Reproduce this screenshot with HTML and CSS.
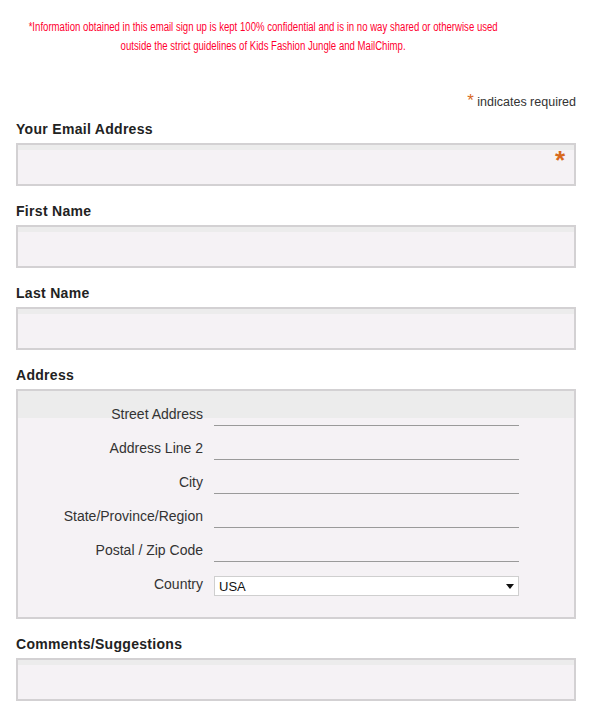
FILE: index.html
```html
<!DOCTYPE html>
<html>
<head>
<meta charset="utf-8">
<link rel="stylesheet" href="styles.css">
</head>
<body>
<div class="page">
  <div class="notice">
    <span class="notice-line">*Information obtained in this email sign up is kept 100% confidential and is in no way shared or otherwise used</span>
    <span class="notice-line">outside the strict guidelines of Kids Fashion Jungle and MailChimp.</span>
  </div>
  <div class="req-note"><span class="star">*</span> indicates required</div>

  <div class="field">
    <label class="label">Your Email Address</label>
    <div class="box box-input"><span class="box-star">*</span></div>
  </div>
  <div class="field">
    <label class="label">First Name</label>
    <div class="box box-input"></div>
  </div>
  <div class="field">
    <label class="label">Last Name</label>
    <div class="box box-input"></div>
  </div>
  <div class="field">
    <label class="label">Address</label>
    <div class="box box-address">
      <div class="addr-row"><span class="addr-label">Street Address</span><span class="addr-line"></span></div>
      <div class="addr-row"><span class="addr-label">Address Line 2</span><span class="addr-line"></span></div>
      <div class="addr-row"><span class="addr-label">City</span><span class="addr-line"></span></div>
      <div class="addr-row"><span class="addr-label">State/Province/Region</span><span class="addr-line"></span></div>
      <div class="addr-row"><span class="addr-label">Postal / Zip Code</span><span class="addr-line"></span></div>
      <div class="addr-row"><span class="addr-label">Country</span><span class="select"><span class="select-text">USA</span><svg class="caret" width="8" height="5" viewBox="0 0 8 5"><path d="M0 0H8L4 5Z" fill="#111"/></svg></span></div>
    </div>
  </div>
  <div class="field">
    <label class="label">Comments/Suggestions</label>
    <div class="box box-input"></div>
  </div>
</div>
</body>
</html>
```

FILE: styles.css
```css
html, body {
  margin: 0;
  padding: 0;
  background: #fff;
}
body {
  font-family: "Liberation Sans", Arial, sans-serif;
  color: #333;
}
.page {
  padding: 0 15px 0 16px;
}
.notice {
  padding: 18px 66px 0 0;
  display: flex;
  flex-direction: column;
  align-items: center;
}
.notice-line {
  display: block;
  white-space: nowrap;
  font-family: "Liberation Sans", Arial, sans-serif;
  font-size: 12px;
  line-height: 19px;
  color: #ff0030;
  transform: scaleX(0.8);
}
.req-note {
  margin-top: 37px;
  text-align: right;
  font-size: 12.5px;
  line-height: 16px;
  color: #333;
}
.req-note .star {
  color: #d8691e;
  font-size: 17px;
  font-weight: normal;
}
.field {
  display: flex;
  flex-direction: column;
}
.label {
  display: block;
  font-weight: bold;
  font-size: 14px;
  letter-spacing: 0.3px;
  line-height: 16px;
  color: #222;
  margin: 11px 0 6px;
}
.field + .field .label {
  margin-top: 17px;
}
.box {
  box-sizing: border-box;
  border: 2px solid #d3d1d3;
  background: linear-gradient(#ececec 0, #ececec 5px, #f5f2f5 5px);
  position: relative;
}
.box-input {
  height: 43px;
}
.box-star {
  position: absolute;
  right: 9px;
  top: 2px;
  font-size: 26px;
  font-weight: bold;
  color: #d8691e;
  line-height: 26px;
}
.box-address {
  background: linear-gradient(#ececec 0, #ececec 27px, #f5f2f5 27px);
  padding: 11px 0 23px;
  display: flex;
  flex-direction: column;
}
.addr-row {
  display: flex;
  align-items: flex-end;
  height: 34px;
}
.addr-row:first-child {
  height: 22px;
}
.addr-label {
  width: 185px;
  text-align: right;
  font-size: 14px;
  line-height: 16px;
  color: #333;
  padding-right: 11px;
  margin-bottom: 2px;
}
.addr-line {
  width: 305px;
  height: 1px;
  background: #9a9a9a;
  margin-bottom: -2px;
}
.select {
  box-sizing: border-box;
  width: 305px;
  height: 20px;
  border: 1px solid #cfcfcf;
  background: #fff;
  display: flex;
  align-items: center;
  justify-content: space-between;
  padding: 0 4px 0 4px;
  margin-bottom: -2px;
  font-size: 13px;
  color: #111;
}
.caret {
  display: block;
}
```
